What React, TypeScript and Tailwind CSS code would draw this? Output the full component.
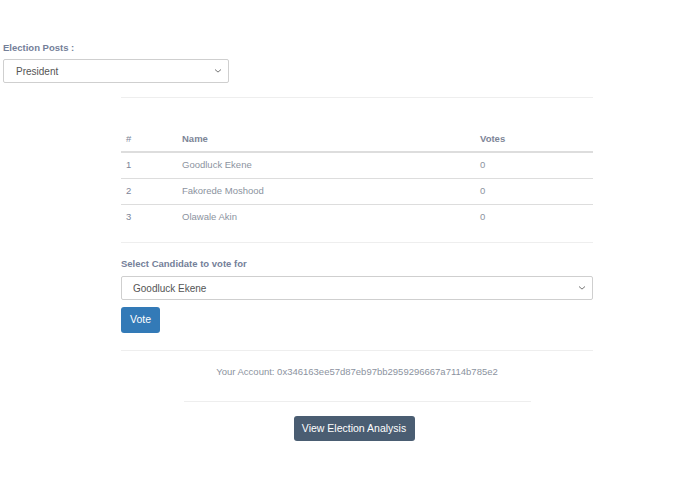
import React from "react";

const Chevron = () => (
  <svg width="8" height="5" viewBox="0 0 8 5" className="absolute right-[6px] top-1/2 -translate-y-1/2">
    <path d="M1 1l3 2.6L7 1" fill="none" stroke="#777" strokeWidth="1" />
  </svg>
);

const Select = ({ value, className }: { value: string; className: string }) => (
  <div className={`relative border border-[#cfcfcf] rounded-[2px] bg-white text-[#555] flex items-center ${className}`}>
    <span>{value}</span>
    <Chevron />
  </div>
);

export default function App() {
  const rows = [
    ["1", "Goodluck Ekene"],
    ["2", "Fakorede Moshood"],
    ["3", "Olawale Akin"],
  ];
  return (
    <div className="w-[695px] h-[494px] bg-white font-['Liberation_Sans',Arial,sans-serif] text-[#8c93a0]">
      <div className="pt-[41px] pl-[3px]">
        <div className="text-[9.5px] font-bold text-[#748099] h-[13px] leading-[13px]">Election Posts :</div>
        <Select value="President" className="mt-[5px] w-[226px] h-[24px] pl-[12px] text-[10px]" />
      </div>
      <div className="ml-[121px] w-[472px] mt-[14px]">
        <div className="h-px bg-[#eeeeee]" />
        <table className="mt-[30px] w-full text-[9.5px] border-collapse">
          <thead>
            <tr className="border-b-2 border-[#dddddd] text-[#7d8597]">
              <th className="text-left font-normal pl-[5px] w-[61px] h-[24px] align-top pt-[4px]">#</th>
              <th className="text-left font-bold w-[298px] align-top pt-[4px]">Name</th>
              <th className="text-left font-bold align-top pt-[4px]">Votes</th>
            </tr>
          </thead>
          <tbody>
            {rows.map(([n, name], i) => (
              <tr key={n} className={i < 2 ? "border-b border-[#dddddd]" : ""}>
                <td className="pl-[5px] h-[26px] text-[#7d8597]">{n}</td>
                <td>{name}</td>
                <td>0</td>
              </tr>
            ))}
          </tbody>
        </table>
        <div className="h-px bg-[#eeeeee] mt-[12px]" />
        <div className="mt-[14px] text-[9.5px] font-bold text-[#748099] h-[13px] leading-[13px]">Select Candidate to vote for</div>
        <Select value="Goodluck Ekene" className="mt-[6px] w-full h-[24px] pl-[11px] text-[10px]" />
        <div className="mt-[7px] w-[39px] h-[26px] rounded-[3px] bg-[#337ab7] text-white text-[10.5px] flex items-center justify-center">Vote</div>
        <div className="h-px bg-[#eeeeee] mt-[17px]" />
        <div className="mt-[14px] text-center text-[9.5px] h-[13px] leading-[13px]">Your Account: 0x346163ee57d87eb97bb2959296667a7114b785e2</div>
        <div className="mx-auto w-[347px] h-px bg-[#eeeeee] mt-[23px]" />
        <div className="flex justify-center mt-[14px] pr-[6px]">
          <div className="w-[121px] h-[25px] rounded-[3px] bg-[#4a5d72] text-white text-[10.5px] flex items-center justify-center">View Election Analysis</div>
        </div>
      </div>
    </div>
  );
}
